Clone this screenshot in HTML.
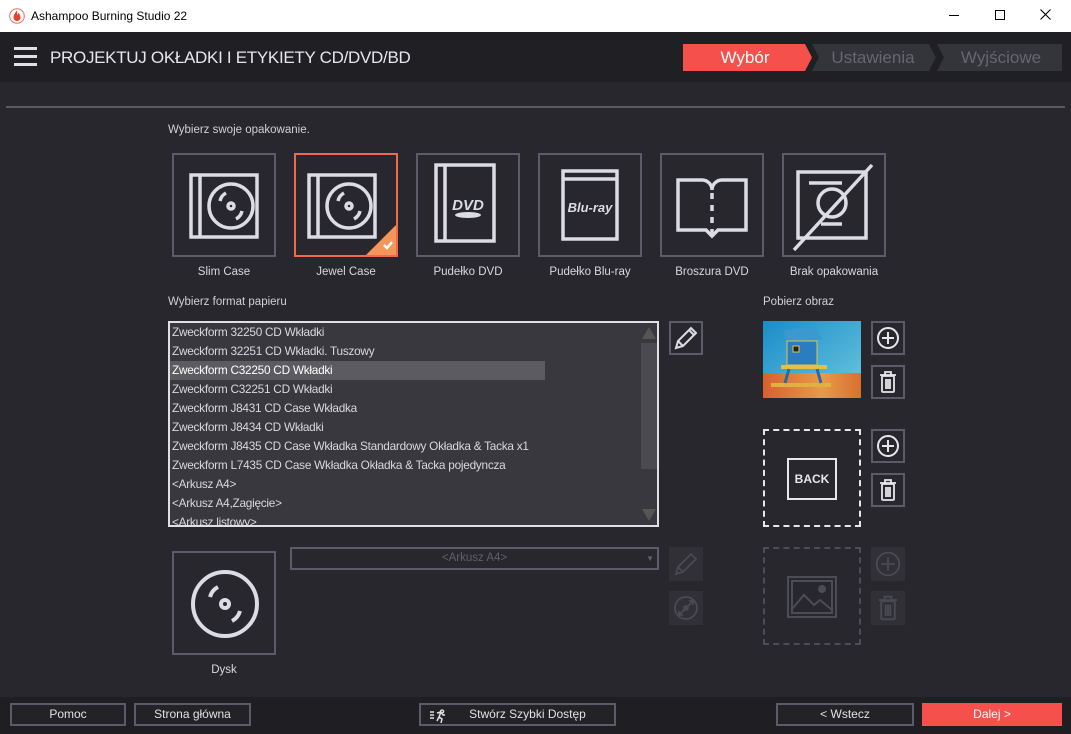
<!DOCTYPE html>
<html><head><meta charset="utf-8"><style>
*{margin:0;padding:0;box-sizing:border-box}
body{width:1071px;height:734px;overflow:hidden;background:#27272d;font-family:"Liberation Sans",sans-serif;color:#d0d0d8;position:relative}
.a{position:absolute}
.tb{left:0;top:0;width:1071px;height:32px;background:#fff;color:#000;font-family:"Liberation Sans",sans-serif;font-size:12px}
.hd{left:0;top:32px;width:1071px;height:50px;background:#1f1f24}
.tile{width:104px;height:104px;border:2px solid #5b5b6a}
.lbl{font-size:11.5px;color:#d8d8de;text-align:center;width:140px}
.sm{font-size:11.5px;color:#d0d0d6}
.ib{width:34px;height:34px;border:2px solid #5b5b6a}
.ibd{width:34px;height:34px;background:#303036}
.btn{height:23px;border:2px solid #5b5b6a;font-size:12px;color:#e0e0e6;text-align:center;line-height:19px;background:#222227}
.row{left:2px;font-size:11.8px;letter-spacing:-0.25px;color:#d8d8de;height:19px;line-height:19px;white-space:nowrap}
svg{display:block}
</style></head><body>
<div class="a tb">
 <svg class="a" style="left:9px;top:8px" width="16" height="16" viewBox="0 0 16 16"><circle cx="8" cy="8" r="7.3" fill="#fff" stroke="#e87060"/><path d="M8 2.5C6 5 4.5 7 4.5 9.5a3.5 3.5 0 0 0 7 0C11.5 7.5 10 6 9.5 4.5 9 6 8.5 6.5 8 7 8.3 5.5 8.2 4 8 2.5z" fill="#e8402a"/></svg>
 <div class="a" style="left:31px;top:9px">Ashampoo Burning Studio 22</div>
 <div class="a" style="left:949px;top:15px;width:10px;height:1px;background:#000"></div>
 <div class="a" style="left:995px;top:10px;width:10px;height:10px;border:1px solid #000"></div>
 <svg class="a" style="left:1040px;top:9px" width="11" height="11"><path d="M0.5 0.5l10 10M10.5 0.5l-10 10" stroke="#000" stroke-width="1.1"/></svg>
</div>
<div class="a hd">
 <div class="a" style="left:14px;top:15px;width:23px;height:3px;background:#e0e0e6;box-shadow:0 8px 0 #e0e0e6,0 16px 0 #e0e0e6"></div>
 <div class="a" style="left:50px;top:16px;font-size:17px;color:#e6e6ec;letter-spacing:-0.3px">PROJEKTUJ OKŁADKI I ETYKIETY CD/DVD/BD</div>
 <svg class="a" style="left:683px;top:12px" width="380" height="27">
  <polygon points="0,0 122,0 129,13.5 122,27 0,27" fill="#f5504b"/>
  <polygon points="129,0 247,0 254,13.5 247,27 129,27 136,13.5" fill="#34343b"/>
  <polygon points="254,0 379,0 379,27 254,27 261,13.5" fill="#34343b"/>
  <polyline points="247,0 254,13.5 247,27" fill="none" stroke="#1f1f24" stroke-width="2"/>
  <text x="62" y="19" fill="#fff" font-size="17" text-anchor="middle" font-family="Liberation Sans,sans-serif">Wybór</text>
  <text x="190" y="19" fill="#66666e" font-size="17" text-anchor="middle" font-family="Liberation Sans,sans-serif">Ustawienia</text>
  <text x="318" y="19" fill="#66666e" font-size="17" text-anchor="middle" font-family="Liberation Sans,sans-serif">Wyjściowe</text>
 </svg>
</div>
<div class="a" style="left:6px;top:106px;width:1059px;height:2px;background:#5a5a5e"></div>
<div class="a sm" style="left:168px;top:124px">Wybierz swoje opakowanie.</div>

<div class="a tile" style="left:172px;top:153px"><svg width="100" height="100" viewBox="0 0 100 100" fill="none" stroke="#dcdce4" stroke-width="3.5"><rect x="17" y="20" width="66" height="62"/><line x1="26" y1="20" x2="26" y2="82"/><circle cx="57" cy="51" r="22"/><circle cx="57" cy="51" r="3"/><path d="M46 46a12 12 0 0 1 6-8M68 56a12 12 0 0 1-6 8"/></svg></div>
<div class="a tile" style="left:294px;top:153px;border-color:#ee6a4e"><svg width="100" height="100" viewBox="0 0 100 100" fill="none" stroke="#dcdce4" stroke-width="3.5"><rect x="13" y="20" width="66" height="62"/><line x1="22" y1="20" x2="22" y2="82"/><circle cx="53" cy="51" r="22"/><circle cx="53" cy="51" r="3"/><path d="M42 46a12 12 0 0 1 6-8M64 56a12 12 0 0 1-6 8"/><polygon points="100,70 100,100 70,100" fill="#f4955a" stroke="none"/><path d="M88 90l3 3 5-6" stroke="#fff" stroke-width="2.5"/></svg></div>
<div class="a tile" style="left:416px;top:153px"><svg width="100" height="100" viewBox="0 0 100 100" fill="none" stroke="#dcdce4" stroke-width="3.5"><rect x="18" y="10" width="58" height="76"/><line x1="27" y1="10" x2="27" y2="86"/><text x="50" y="55" fill="#dcdce4" stroke="none" font-size="15" font-weight="bold" font-style="italic" text-anchor="middle" font-family="Liberation Sans,sans-serif">DVD</text><ellipse cx="50" cy="60" rx="13" ry="3" fill="#dcdce4" stroke="none"/></svg></div>
<div class="a tile" style="left:538px;top:153px"><svg width="100" height="100" viewBox="0 0 100 100" fill="none" stroke="#dcdce4" stroke-width="3.5"><rect x="23" y="16" width="54" height="68"/><line x1="23" y1="24" x2="77" y2="24"/><text x="50" y="57" fill="#dcdce4" stroke="none" font-size="13" font-weight="bold" font-style="italic" text-anchor="middle" font-family="Liberation Sans,sans-serif">Blu-ray</text></svg></div>
<div class="a tile" style="left:660px;top:153px"><svg width="100" height="100" viewBox="0 0 100 100" fill="none" stroke="#dcdce4" stroke-width="3.5"><path d="M16 25h24a10 10 0 0 1 10 10 10 10 0 0 1 10-10h24v50H56l-6 6-6-6H16z"/><path d="M50 38v6M50 50v6M50 62v6M50 74v6"/></svg></div>
<div class="a tile" style="left:782px;top:153px"><svg width="100" height="100" viewBox="0 0 100 100" fill="none" stroke="#dcdce4" stroke-width="3.5"><rect x="14" y="17" width="68" height="66"/><line x1="25" y1="28" x2="58" y2="28"/><line x1="37" y1="69" x2="58" y2="69"/><circle cx="48" cy="48" r="14"/><line x1="10" y1="95" x2="88" y2="10"/></svg></div>
<div class="a lbl" style="left:154px;top:266px">Slim Case</div>
<div class="a lbl" style="left:276px;top:266px">Jewel Case</div>
<div class="a lbl" style="left:398px;top:266px">Pudełko DVD</div>
<div class="a lbl" style="left:520px;top:266px">Pudełko Blu-ray</div>
<div class="a lbl" style="left:642px;top:266px">Broszura DVD</div>
<div class="a lbl" style="left:764px;top:266px">Brak opakowania</div>

<div class="a sm" style="left:168px;top:296px">Wybierz format papieru</div>
<div class="a sm" style="left:763px;top:296px">Pobierz obraz</div>

<div class="a" style="left:168px;top:321px;width:491px;height:206px;border:2px solid #e0e0e4;background:#38383e;overflow:hidden">
 <div class="a" style="left:0;top:38px;width:375px;height:19px;background:#5c5c60"></div>
 <div class="a row" style="top:0">Zweckform 32250 CD Wkładki</div>
 <div class="a row" style="top:19px">Zweckform 32251 CD Wkładki. Tuszowy</div>
 <div class="a row" style="top:38px;color:#fff">Zweckform C32250 CD Wkładki</div>
 <div class="a row" style="top:57px">Zweckform C32251 CD Wkładki</div>
 <div class="a row" style="top:76px">Zweckform J8431 CD Case Wkładka</div>
 <div class="a row" style="top:95px">Zweckform J8434 CD Wkładki</div>
 <div class="a row" style="top:114px">Zweckform J8435 CD Case Wkładka Standardowy Okładka &amp; Tacka x1</div>
 <div class="a row" style="top:133px">Zweckform L7435 CD Case Wkładka Okładka &amp; Tacka pojedyncza</div>
 <div class="a row" style="top:152px">&lt;Arkusz A4&gt;</div>
 <div class="a row" style="top:171px">&lt;Arkusz A4,Zagięcie&gt;</div>
 <div class="a row" style="top:190px">&lt;Arkusz listowy&gt;</div>
 <div class="a" style="left:471px;top:20px;width:16px;height:126px;background:#4a4a50"></div>
 <svg class="a" style="left:472px;top:4px" width="14" height="12"><polygon points="7,0 14,12 0,12" fill="#555"/></svg>
 <svg class="a" style="left:472px;top:186px" width="14" height="12"><polygon points="0,0 14,0 7,12" fill="#555"/></svg>
</div>

<div class="a ib" style="left:669px;top:321px"><svg width="30" height="30" viewBox="0 0 30 30" fill="none" stroke="#dcdce4" stroke-width="2"><path d="M5 25l2-7L20 5l5 5L12 23z M7 18l5 5 M18 7l5 5"/></svg></div>
<svg class="a" style="left:763px;top:321px" width="98" height="77" viewBox="0 0 98 77">
 <defs><linearGradient id="sky" x1="0" y1="0" x2="1" y2="1"><stop offset="0" stop-color="#1a8cc8"/><stop offset="1" stop-color="#6cc8e0"/></linearGradient><linearGradient id="sand" x1="0" y1="0" x2="1" y2="0"><stop offset="0" stop-color="#d8602e"/><stop offset="0.6" stop-color="#e89a4a"/><stop offset="1" stop-color="#d87030"/></linearGradient></defs>
 <rect width="98" height="77" fill="url(#sky)"/><rect y="52" width="98" height="25" fill="url(#sand)"/>
 <polygon points="20,10 50,5 60,18 26,22" fill="#3a9ad0"/><rect x="24" y="20" width="30" height="24" fill="#2a7ec0" stroke="#e8c040"/><rect x="30" y="25" width="6" height="6" fill="#222" stroke="#e8c040"/>
 <rect x="18" y="44" width="46" height="4" fill="#e8c040"/><rect x="8" y="62" width="60" height="4" fill="#e0b040"/><line x1="26" y1="48" x2="22" y2="62" stroke="#2a6aa0" stroke-width="3"/><line x1="54" y1="48" x2="58" y2="62" stroke="#2a6aa0" stroke-width="3"/>
</svg>
<div class="a ib" style="left:871px;top:321px"><svg width="30" height="30" viewBox="0 0 30 30" fill="none" stroke="#e6e6ec" stroke-width="2"><circle cx="15" cy="15" r="10"/><path d="M15 9v12M9 15h12"/></svg></div>
<div class="a ib" style="left:871px;top:365px"><svg width="30" height="30" viewBox="0 0 30 30" fill="none" stroke="#e6e6ec" stroke-width="1.8"><path d="M7 8h16M12 8V5h6v3"/><rect x="9" y="9" width="12" height="16" rx="1"/><path d="M13 12v10M15 12v10M17 12v10"/></svg></div>

<div class="a" style="left:763px;top:429px;width:98px;height:98px;border:2px dashed #e6e6ec"></div>
<div class="a" style="left:787px;top:458px;width:50px;height:42px;border:2px solid #e6e6ec;font-weight:bold;font-size:12px;color:#e6e6ec;text-align:center;line-height:38px">BACK</div>
<div class="a ib" style="left:871px;top:429px"><svg width="30" height="30" viewBox="0 0 30 30" fill="none" stroke="#e6e6ec" stroke-width="2"><circle cx="15" cy="15" r="10"/><path d="M15 9v12M9 15h12"/></svg></div>
<div class="a ib" style="left:871px;top:473px"><svg width="30" height="30" viewBox="0 0 30 30" fill="none" stroke="#e6e6ec" stroke-width="1.8"><path d="M7 8h16M12 8V5h6v3"/><rect x="9" y="9" width="12" height="16" rx="1"/><path d="M13 12v10M15 12v10M17 12v10"/></svg></div>

<div class="a" style="left:763px;top:547px;width:98px;height:98px;border:2px dashed #4c4c56"></div>
<svg class="a" style="left:787px;top:576px" width="50" height="42" fill="none" stroke="#4c4c56" stroke-width="2"><rect x="1" y="1" width="48" height="40"/><rect x="5" y="5" width="40" height="32"/><path d="M5 33l12-14 10 10 6-5 12 10"/><circle cx="35" cy="13" r="3" fill="#4c4c56"/></svg>
<div class="a ibd" style="left:871px;top:547px"><svg width="34" height="34" viewBox="0 0 30 30" fill="none" stroke="#4a4a52" stroke-width="1.6"><circle cx="15" cy="15" r="10"/><path d="M15 9v12M9 15h12"/></svg></div>
<div class="a ibd" style="left:871px;top:591px"><svg width="34" height="34" viewBox="0 0 30 30" fill="none" stroke="#4a4a52" stroke-width="1.6"><path d="M7 8h16M12 8V5h6v3"/><rect x="9" y="9" width="12" height="16" rx="1"/><path d="M13 12v10M15 12v10M17 12v10"/></svg></div>

<div class="a" style="left:290px;top:547px;width:369px;height:23px;border:2px solid #5b5b6a;font-size:11.5px;color:#606068;text-align:center;line-height:19px">&lt;Arkusz A4&gt;<span style="position:absolute;right:3px;font-size:8px">▼</span></div>
<div class="a ibd" style="left:669px;top:547px"><svg width="34" height="34" viewBox="-2 -2 34 34" fill="none" stroke="#4a4a52" stroke-width="1.8"><path d="M5 25l2-7L20 5l5 5L12 23z M7 18l5 5"/></svg></div>
<div class="a ibd" style="left:669px;top:591px"><svg width="34" height="34" viewBox="0 0 34 34" fill="none" stroke="#4a4a52" stroke-width="1.8"><circle cx="17" cy="17" r="11"/><circle cx="17" cy="17" r="2"/><path d="M10 24l14-14M20 10h4v4M14 24h-4v-4"/></svg></div>

<div class="a tile" style="left:172px;top:551px"><svg width="100" height="100" viewBox="0 0 100 100" fill="none" stroke="#dcdce4" stroke-width="4"><circle cx="51" cy="51" r="32"/><circle cx="51" cy="51" r="4"/><path d="M36 44a16 16 0 0 1 8-10M66 58a16 16 0 0 1-8 10"/></svg></div>
<div class="a lbl" style="left:154px;top:664px">Dysk</div>

<div class="a" style="left:0;top:697px;width:1071px;height:37px;background:#1e1e23"></div>
<div class="a btn" style="left:10px;top:703px;width:116px">Pomoc</div>
<div class="a btn" style="left:134px;top:703px;width:117px">Strona główna</div>
<div class="a btn" style="left:419px;top:703px;width:197px"><svg class="a" style="left:8px;top:2px" width="18" height="16" fill="none" stroke="#e0e0e6" stroke-width="1.5"><path d="M1 5h4M1 8h4M1 11h4M13 3a1.5 1.5 0 1 0 0.1 0M8 6l4-1 2 3 2 0M12 5l-2 5 3 2-1 4M10 10l-2 4"/></svg><span style="position:relative;left:10px">Stwórz Szybki Dostęp</span></div>
<div class="a btn" style="left:776px;top:703px;width:138px">&lt; Wstecz</div>
<div class="a btn" style="left:922px;top:703px;width:140px;background:#f5504b;border-color:#f5504b;color:#fff">Dalej &gt;</div>
</body></html>
